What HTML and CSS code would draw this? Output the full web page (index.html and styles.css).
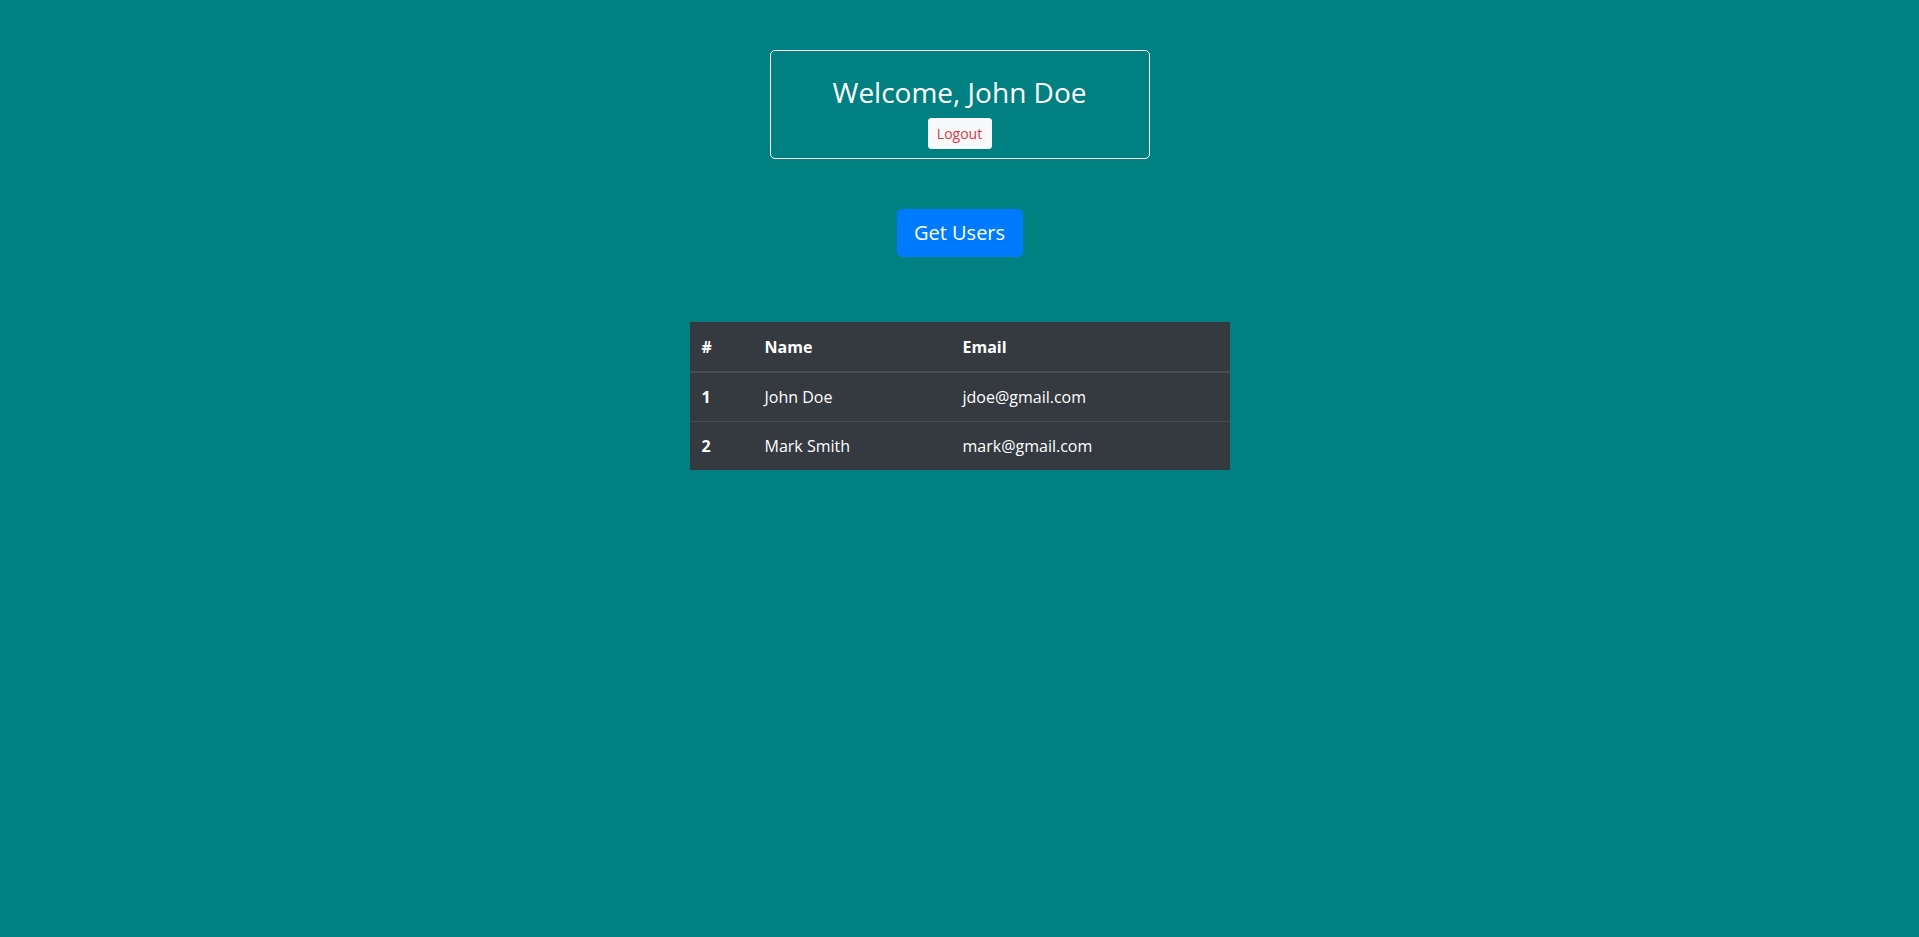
FILE: index.html
```html
<!DOCTYPE html>
<html>
<head>
<meta charset="utf-8">
<link rel="stylesheet" href="styles.css">
</head>
<body>
<div class="app">
  <div class="welcome-card">
    <h3 class="welcome-title">Welcome, John Doe</h3>
    <button class="btn-logout">Logout</button>
  </div>
  <button class="btn-get">Get Users</button>
  <table class="users">
    <thead>
      <tr><th class="c-num">#</th><th class="c-name">Name</th><th>Email</th></tr>
    </thead>
    <tbody>
      <tr><th class="c-num">1</th><td>John Doe</td><td>jdoe@gmail.com</td></tr>
      <tr><th class="c-num">2</th><td>Mark Smith</td><td>mark@gmail.com</td></tr>
    </tbody>
  </table>
</div>
</body>
</html>
```
FILE: styles.css
```css
html, body {
  margin: 0;
  padding: 0;
  height: 100%;
}
body {
  background: #008080;
  font-family: "Open Sans", "Liberation Sans", sans-serif;
  color: #fff;
}
.app {
  display: flex;
  flex-direction: column;
  align-items: center;
  padding-top: 50px;
}
.welcome-card {
  box-sizing: border-box;
  width: 380px;
  height: 109px;
  border: 1px solid #fff;
  border-radius: 5px;
  display: flex;
  flex-direction: column;
  align-items: center;
  padding-top: 25px;
}
.welcome-title {
  margin: 0 0 8px;
  font-size: 28px;
  font-weight: 400;
  line-height: 33.6px;
}
.btn-logout {
  font-family: inherit;
  font-size: 14px;
  line-height: 21px;
  padding: 4px 8px;
  height: 31px;
  width: 64px;
  border: 1px solid #f8f9fa;
  border-radius: 3px;
  background: #f8f9fa;
  color: #dc3545;
  cursor: pointer;
}
.btn-get {
  margin-top: 50px;
  font-family: inherit;
  font-size: 20px;
  line-height: 30px;
  padding: 8px 16px;
  height: 48px;
  width: 126px;
  border: 1px solid #007bff;
  border-radius: 5px;
  background: #007bff;
  color: #fff;
  cursor: pointer;
}
.users {
  margin-top: 65px;
  width: 540px;
  border-collapse: collapse;
  background: #343a40;
  color: #fff;
  font-size: 16px;
  line-height: 24px;
  text-align: left;
}
.users th, .users td {
  padding: 12px;
  vertical-align: top;
}
.users tbody td, .users tbody th {
  border-top: 1px solid #454d55;
}
.users thead th {
  font-weight: 700;
  border-top: 1px solid #343a40;
  border-bottom: 2px solid #454d55;
}
.users th { font-weight: 700; }
.c-num { width: 39px; }
.c-name { width: 174px; }
```
